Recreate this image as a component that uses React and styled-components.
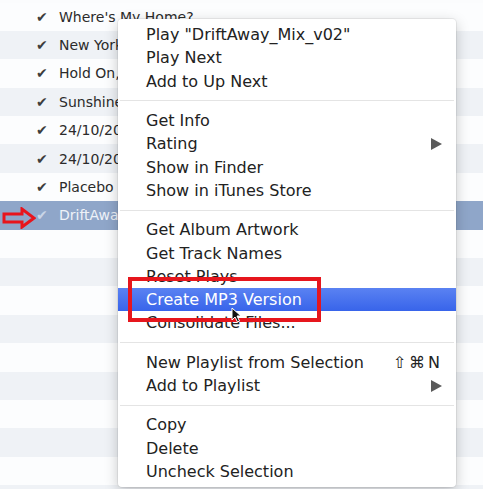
import React from "react"
import styled, { createGlobalStyle } from "styled-components"

const GlobalStyle = createGlobalStyle`
  body {
    margin: 0;
    overflow: hidden;
    background: #fff;
  }
`

const Screen = styled.div`
  position: relative;
  width: 483px;
  height: 489px;
  overflow: hidden;
  background: #fbfcfd;
  font-family: "DejaVu Sans", "Liberation Sans", sans-serif;
`

const TrackList = styled.div`
  display: flex;
  flex-direction: column;
  padding-top: 2.5px;
`

const TrackRow = styled.div`
  height: 28.4px;
  display: flex;
  align-items: center;
  padding-left: 36px;
  gap: 9px;
  font-size: 14px;
  color: ${props => (props.$selected ? "#eef2f8" : "#2b2b2b")};
  background: ${props =>
    props.$selected ? "#8fa6c9" : props.$striped ? "#eff2f6" : "#fcfdfe"};
  white-space: nowrap;
`

const Check = styled.span`
  width: 14px;
  font-size: 14px;
  color: ${props => (props.$selected ? "#c9d5e7" : "#3d3d3d")};
`

const Menu = styled.div`
  position: absolute;
  left: 118px;
  top: 19px;
  width: 338px;
  padding: 4px 0;
  background: #fff;
  border-radius: 4px;
  box-shadow: 0 0 0 1px rgba(0, 0, 0, 0.06), 0 4px 14px rgba(0, 0, 0, 0.22);
  font-size: 16px;
`

const MenuItem = styled.div`
  height: 23.3px;
  display: flex;
  align-items: center;
  justify-content: space-between;
  padding: 0 14px 0 28px;
  color: ${props => (props.$active ? "#fff" : "#222")};
  background: ${props =>
    props.$active ? "linear-gradient(#5a82f2, #3864ea)" : "transparent"};
  white-space: nowrap;
`

const Shortcut = styled.span`
  font-size: 16px;
  letter-spacing: 3px;
  margin-right: -1px;
  color: #222;
`

const Separator = styled.div`
  height: 16px;
  display: flex;
  align-items: center;
  padding: 0 2px;

  &::after {
    content: "";
    flex: 1;
    height: 1px;
    background: #e4e4e4;
  }
`

const Highlight = styled.div`
  position: absolute;
  left: 128px;
  top: 277px;
  width: 193px;
  height: 45px;
  box-sizing: border-box;
  border: 4px solid #e6161d;
`

const Overlay = styled.svg`
  position: absolute;
  left: ${props => props.$x}px;
  top: ${props => props.$y}px;
`

const SubmenuArrow = () => (
  <svg width="11" height="12" viewBox="0 0 11 12">
    <polygon points="0,0 11,6 0,12" fill="#5a5a5a" />
  </svg>
)

const tracks = [
  "Where's My Home?",
  "New York",
  "Hold On,",
  "Sunshine",
  "24/10/2012",
  "24/10/2012",
  "Placebo",
  "DriftAway",
  "",
  "",
  "",
  "",
  "",
  "",
  "",
  "",
  "",
  "",
]

const groups = [
  [{ label: 'Play "DriftAway_Mix_v02"' }, { label: "Play Next" }, { label: "Add to Up Next" }],
  [
    { label: "Get Info" },
    { label: "Rating", sub: true },
    { label: "Show in Finder" },
    { label: "Show in iTunes Store" },
  ],
  [
    { label: "Get Album Artwork" },
    { label: "Get Track Names" },
    { label: "Reset Plays" },
    { label: "Create MP3 Version", active: true },
    { label: "Consolidate Files..." },
  ],
  [
    { label: "New Playlist from Selection", shortcut: "⇧⌘N" },
    { label: "Add to Playlist", sub: true },
  ],
  [{ label: "Copy" }, { label: "Delete" }, { label: "Uncheck Selection" }],
]

const App = () => {
  return (
    <Screen>
      <GlobalStyle />
      <TrackList>
        {tracks.map((title, i) => (
          <TrackRow key={i} $striped={i % 2 === 1} $selected={i === 7}>
            {title && <Check $selected={i === 7}>✔</Check>}
            {title}
          </TrackRow>
        ))}
      </TrackList>

      <Overlay $x={2} $y={207} width="34" height="22" viewBox="0 0 34 22">
        <path
          d="M2 7 H20 V2 L32 11 L20 20 V15 H2 Z"
          fill="none"
          stroke="#e8141c"
          strokeWidth="3"
          strokeLinejoin="miter"
        />
      </Overlay>

      <Menu>
        {groups.map((group, g) => (
          <React.Fragment key={g}>
            {g > 0 && <Separator />}
            {group.map(item => (
              <MenuItem key={item.label} $active={item.active}>
                {item.label}
                {item.shortcut && <Shortcut>{item.shortcut}</Shortcut>}
                {item.sub && <SubmenuArrow />}
              </MenuItem>
            ))}
          </React.Fragment>
        ))}
      </Menu>

      <Highlight />

      <Overlay $x={231} $y={307} width="12" height="17" viewBox="0 0 12 17">
        <path
          d="M1 1 L1 13 L4 10 L6.5 15 L8.5 14 L6 9 L10 9 Z"
          fill="#111"
          stroke="#fff"
          strokeWidth="1"
        />
      </Overlay>
    </Screen>
  )
}

export default App
